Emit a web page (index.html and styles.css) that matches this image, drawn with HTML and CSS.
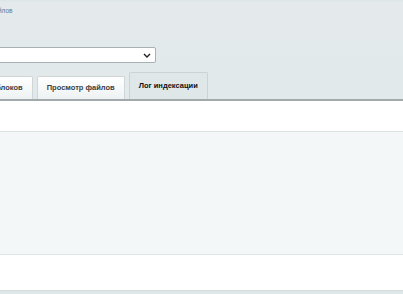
FILE: index.html
```html
<!DOCTYPE html>
<html lang="ru">
<head>
<meta charset="utf-8">
<link rel="stylesheet" href="styles.css">
</head>
<body>
<div class="head">
  <div class="crumb">файлов</div>
  <div class="selrow">
    <div class="select"><span class="chev"><svg width="8" height="5" viewBox="0 0 8 5"><path d="M1 1 L4 4 L7 1" fill="none" stroke="#222" stroke-width="1.4"/></svg></span></div>
  </div>
  <div class="tabs">
    <div class="tab t1">Список блоков</div>
    <div class="tab t2">Просмотр файлов</div>
    <div class="tab active">Лог индексации</div>
  </div>
</div>
<div class="content">
  <div class="gap1"></div>
  <div class="panel"></div>
  <div class="gap2"></div>
  <div class="foot"></div>
</div>
</body>
</html>
```
FILE: styles.css
```css
html, body { margin: 0; padding: 0; }
body {
  width: 403px; height: 294px; overflow: hidden;
  font-family: "Liberation Sans", Arial, sans-serif;
  background: #fff;
}
.head {
  background: linear-gradient(#dde5e7 0, #e4eaec 3px, #e2e9eb 100%);
  height: 99px;
  position: relative;
  overflow: hidden;
}
.crumb {
  font-size: 6.5px;
  color: #5a7aa0;
  padding-top: 6px;
  margin-left: -11px;
  height: 9px;
  line-height: 9px;
}
.selrow { padding-top: 32px; height: 16px; }
.select {
  margin-left: -10px;
  width: 164px; height: 14px;
  background: #fff;
  border: 1px solid #a7b0b3;
  border-radius: 2px;
  display: flex; justify-content: flex-end; align-items: center;
}
.chev { display: flex; margin-right: 4px; }
.tabs {
  display: flex; align-items: flex-end;
  position: absolute; left: 0; bottom: 0;
  gap: 4px;
}
.tab {
  font-size: 7.5px; font-weight: bold; color: #3b3f41;
  height: 23px; line-height: 21px;
  box-sizing: border-box;
  border: 1px solid #cfd6d8; border-bottom: none;
  border-radius: 2px 2px 0 0;
  background: linear-gradient(#ffffff, #eef2f3);
  padding: 0 9px;
  white-space: nowrap;
}
.t1 { margin-left: -43px; }
.tab.active {
  height: 27px; line-height: 25px;
  background: #dfe7e9;
  color: #111;
  padding: 0 9px;
  border-color: #cbd3d5;
}
.content { border-top: 2px solid #a1a9ab; }
.gap1 { height: 30px; }
.panel {
  height: 122px;
  background: #f3f7f8;
  border-top: 1px solid #dce3e5;
  border-bottom: 1px solid #e0e6e8;
}
.gap2 { height: 35px; }
.foot { height: 10px; background: #dfe6e8; border-top: 1px solid #d5dcde; }
```
